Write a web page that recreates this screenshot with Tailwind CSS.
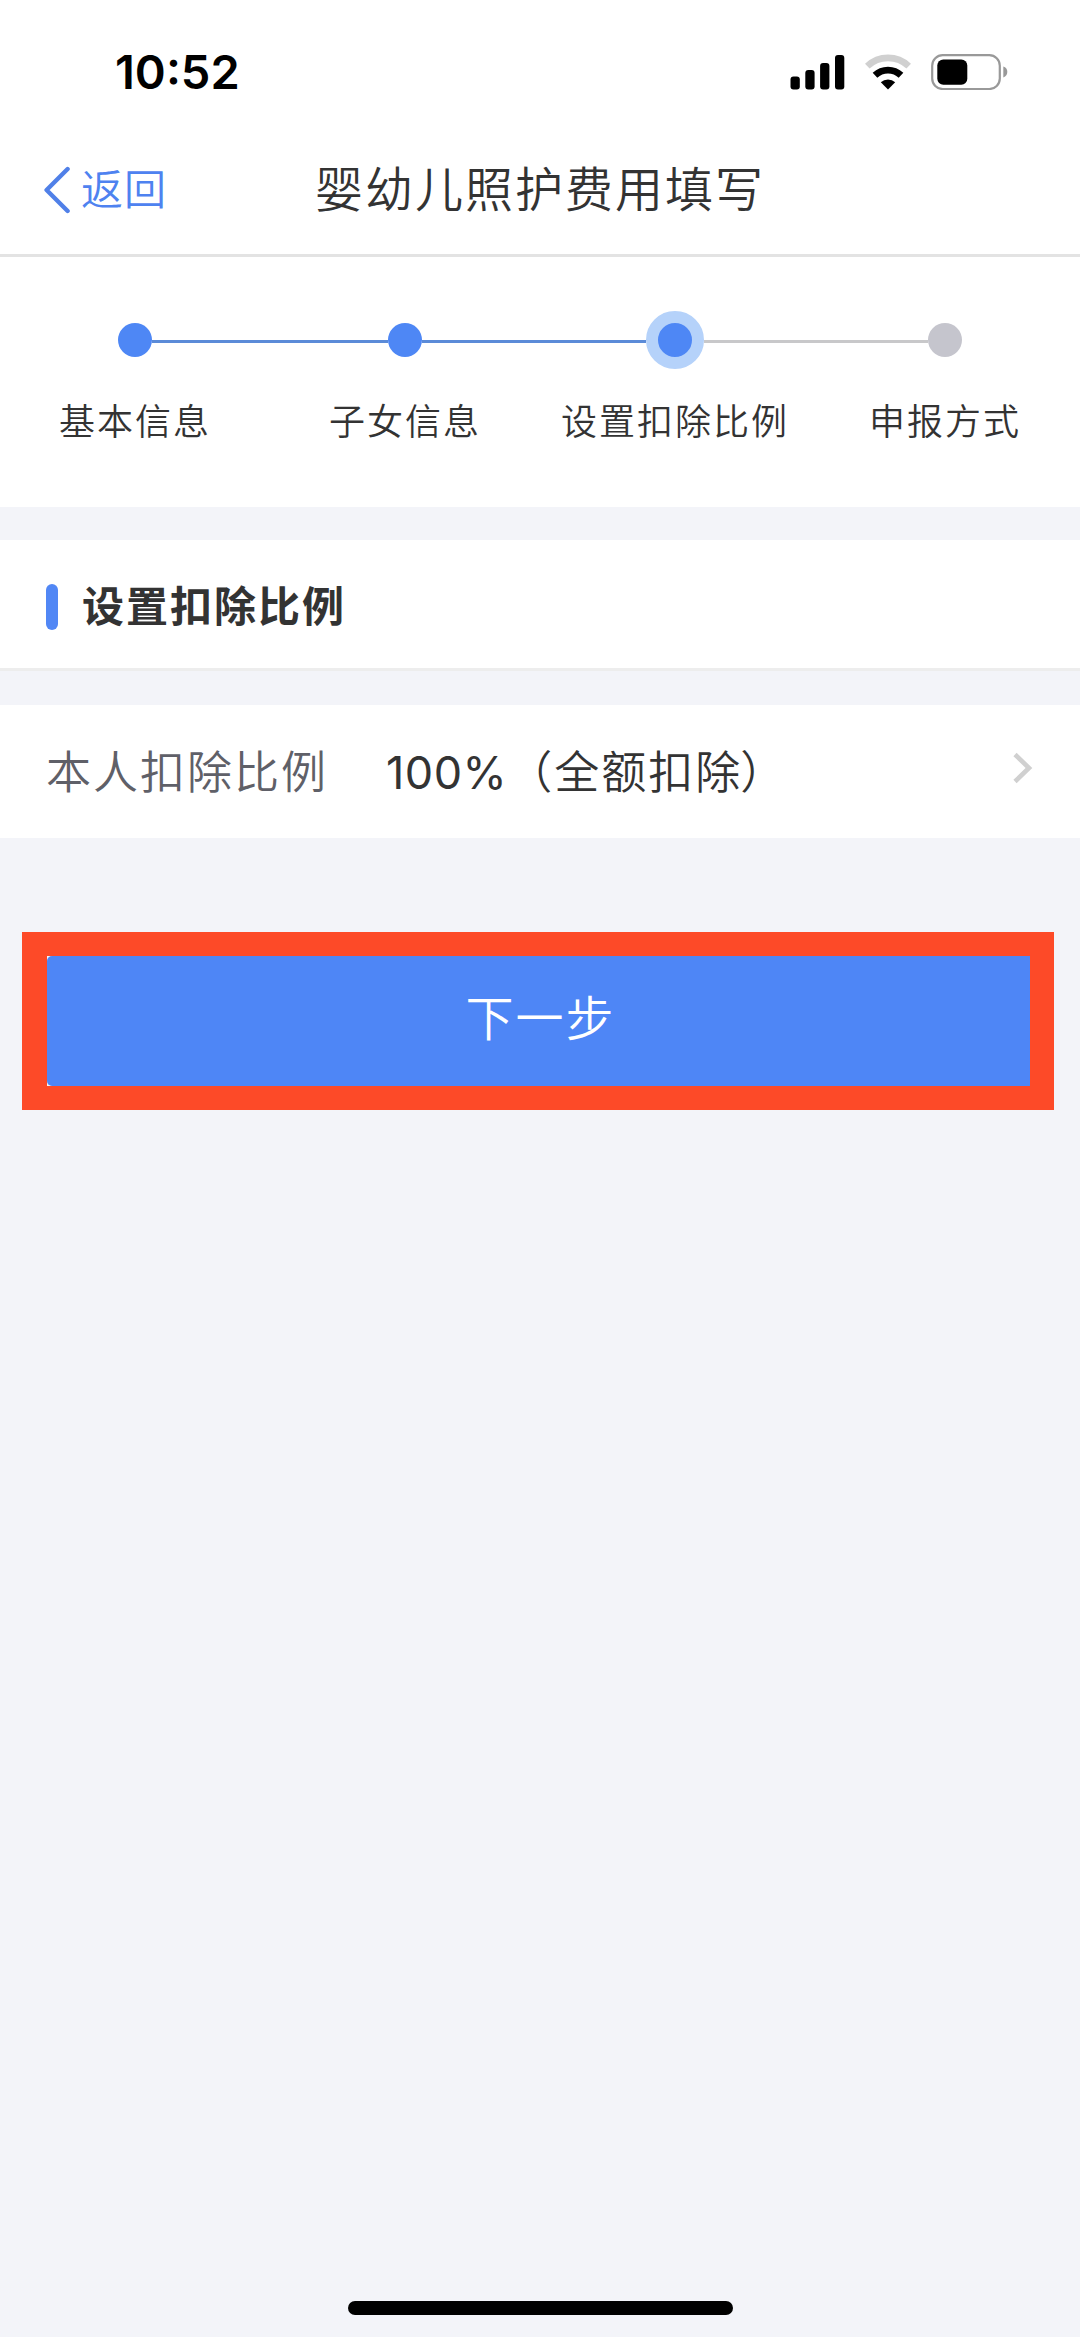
<!DOCTYPE html>
<html lang="zh-CN">

<head>
    <meta charset="UTF-8">
    <meta name="viewport" content="width=device-width, initial-scale=1.0">
    <title>婴幼儿照护费用填写</title>
    <script src="https://cdn.jsdelivr.net/npm/@tailwindcss/browser@4"></script>
</head>

<body class="bg-[#f3f4f9] text-[#333] font-[350] font-['Inter','Noto_Sans_CJK_SC',sans-serif]">
    <div class="w-[1080px] h-[2337px] flex flex-col overflow-hidden">

        <!-- Header -->
        <header class="bg-white h-[257px] border-b-3 border-[#e3e3e3] shrink-0">
            <!-- Status Bar -->
            <div class="h-[126px] pt-[17px] pl-[115px] pr-[72px] flex items-center justify-between text-black">
                <span class="text-[47px] leading-none font-semibold pb-[1px]">10:52</span>
                <div class="flex items-center gap-[20px]">
                    <svg class="w-[55px] h-[36px]" viewBox="0 0 55 36">
                        <rect x="0.5" y="22.5" width="9.3" height="13" rx="3" />
                        <rect x="15.3" y="16" width="9.3" height="19.5" rx="3" />
                        <rect x="30.1" y="9" width="9.3" height="26.5" rx="3" />
                        <rect x="45" y="1" width="9.3" height="34.5" rx="3" />
                    </svg>
                    <svg class="w-[46px] h-[36px]" viewBox="0 0 46 36" fill="none">
                        <path d="M2.3 12.2 A30 30 0 0 1 43.7 12.2" stroke="#d0d0d0" stroke-width="6.6" />
                        <path d="M10 21.2 A19 19 0 0 1 36 21.2" stroke="#000" stroke-width="6.8" />
                        <path d="M15.8 28.2 A10.6 10.6 0 0 1 30.2 28.2 L23 35.4 Z" fill="#000" />
                    </svg>
                    <svg class="w-[77px] h-[36px]" viewBox="0 0 77 36" fill="none">
                        <rect x="1.2" y="1.2" width="67.6" height="33.8" rx="10.5" stroke="#999" stroke-width="2.2" />
                        <rect x="6.3" y="5.5" width="30" height="25.3" rx="6" fill="#000" />
                        <path d="M72.3 12.6 Q76.3 14 76.3 18 Q76.3 22 72.3 23.4 Z" fill="#999" />
                    </svg>
                </div>
            </div>
            <!-- Nav Bar -->
            <div class="h-[127px] grid grid-cols-[300px_1fr_300px] items-center">
                <a href="#" class="flex items-center pl-[43px] gap-[10px] text-[#4e82f0]">
                    <svg class="w-[28px] h-[48px]" viewBox="0 0 28 48" fill="none" stroke="#5080e8" stroke-width="4.4" stroke-linecap="round" stroke-linejoin="round">
                        <path d="M24.6 3 L3.6 24 L24.6 45" />
                    </svg>
                    <span class="text-[42px] leading-none tracking-[1px] whitespace-nowrap">返回</span>
                </a>
                <h1 class="text-[48px] leading-none tracking-[2px] text-center whitespace-nowrap">婴幼儿照护费用填写</h1>
            </div>
        </header>

        <!-- Steps -->
        <section class="bg-white h-[250px] pt-[54px] shrink-0">
            <div class="grid grid-cols-4 text-center text-[36px] leading-[48px] tracking-[2px]">
                <div class="flex flex-col items-center">
                    <div class="w-full h-[58px] flex items-center">
                        <i class="flex-1"></i>
                        <i class="size-[34px] rounded-full bg-[#4e87f5]"></i>
                        <i class="flex-1 h-[3px] mt-[2px] bg-[#5b8bd8]"></i>
                    </div>
                    <span class="mt-[29px]">基本信息</span>
                </div>
                <div class="flex flex-col items-center">
                    <div class="w-full h-[58px] flex items-center">
                        <i class="flex-1 h-[3px] mt-[2px] bg-[#5b8bd8]"></i>
                        <i class="size-[34px] rounded-full bg-[#4e87f5]"></i>
                        <i class="flex-1 h-[3px] mt-[2px] bg-[#5b8bd8]"></i>
                    </div>
                    <span class="mt-[29px]">子女信息</span>
                </div>
                <div class="flex flex-col items-center">
                    <div class="w-full h-[58px] flex items-center">
                        <i class="flex-1 h-[3px] mt-[2px] bg-[#5b8bd8]"></i>
                        <i class="size-[58px] rounded-full bg-[#4e87f5] border-12 border-[#b5d2fa]"></i>
                        <i class="flex-1 h-[3px] mt-[2px] bg-[#c8c8ca]"></i>
                    </div>
                    <span class="mt-[29px] whitespace-nowrap">设置扣除比例</span>
                </div>
                <div class="flex flex-col items-center">
                    <div class="w-full h-[58px] flex items-center">
                        <i class="flex-1 h-[3px] mt-[2px] bg-[#c8c8ca]"></i>
                        <i class="size-[34px] rounded-full bg-[#c5c5cd]"></i>
                        <i class="flex-1"></i>
                    </div>
                    <span class="mt-[29px]">申报方式</span>
                </div>
            </div>
        </section>

        <!-- Section Title -->
        <section class="bg-white h-[131px] mt-[33px] pt-[6px] pl-[46px] flex items-center border-b-3 border-[#ededed] shrink-0">
            <i class="w-[12px] h-[46px] rounded-full bg-[#5187f5]"></i>
            <h2 class="ml-[24px] text-[42px] leading-none tracking-[2px] font-bold">设置扣除比例</h2>
        </section>

        <!-- Ratio Row -->
        <section class="bg-white h-[133px] mt-[34px] pl-[46px] pr-[46px] flex items-center text-[45px] leading-none tracking-[2px] shrink-0">
            <span class="w-[340px] pt-[2px] text-[#5f6068]">本人扣除比例</span>
            <span class="flex-1 pt-[2px] whitespace-nowrap"><span class="tracking-[0.5px] font-normal">100%</span>（全额扣除<span class="-ml-[2px]">）</span></span>
            <svg class="w-[22px] h-[32px] mb-[7px]" viewBox="0 0 22 32" fill="none" stroke="#d0d0d0" stroke-width="4.6">
                <path d="M3 2.5 L17 16 L3 29.5" />
            </svg>
        </section>

        <!-- Next Button -->
        <div class="mt-[94px] ml-[22px] w-[1032px] h-[178px] bg-[#fd4a28] pt-[24px] pb-[24px] pl-[25px] pr-[24px] shrink-0">
            <div class="h-full bg-[#f3f4f9]">
                <button class="block w-full h-full bg-[#4e86f6] rounded-l-[5px] text-white text-[48px] leading-none tracking-[2px] pb-[4px] pl-[4px]">下一步</button>
            </div>
        </div>

        <!-- Home Indicator -->
        <div class="mt-auto mb-[22px] mx-auto w-[385px] h-[14px] rounded-full bg-black shrink-0"></div>
    </div>
</body>

</html>
